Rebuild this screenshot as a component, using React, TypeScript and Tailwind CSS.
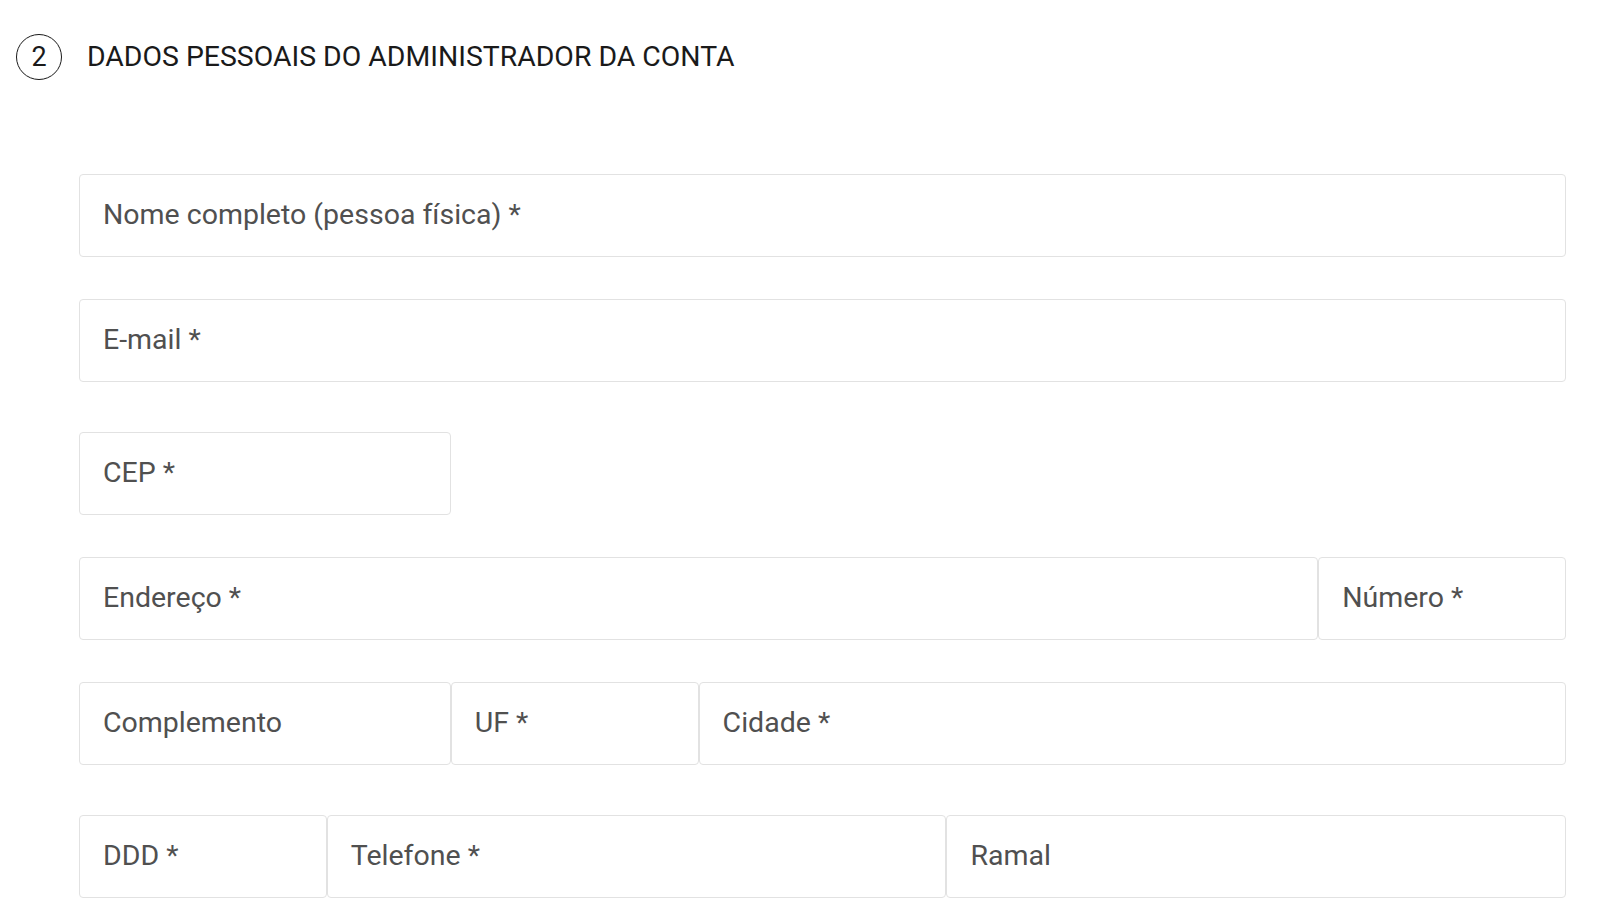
import React from "react";

const font = { fontFamily: "Roboto, 'Liberation Sans', sans-serif" };

function Field({ label, span }: { label: string; span: string }) {
  return (
    <div
      className={`${span} h-[83px] flex items-center pl-[23px] border border-[#e2e2e2] rounded-[4px] bg-white text-[28.5px] text-[#505050] leading-none`}
    >
      {label}
    </div>
  );
}

export default function App() {
  return (
    <div className="w-[1604px] h-[916px] bg-white overflow-hidden" style={font}>
      <div className="flex items-center pl-[16px] pt-[34px]">
        <div className="w-[46px] h-[46px] rounded-full border-[1.5px] border-[#1a1a1a] flex items-center justify-center text-[27px] text-[#1a1a1a] leading-none">
          2
        </div>
        <div className="ml-[25px] text-[28.4px] text-[#1a1a1a] leading-none">
          DADOS PESSOAIS DO ADMINISTRADOR DA CONTA
        </div>
      </div>

      <div className="ml-[79px] w-[1487px] mt-[94px]">
        <div className="grid grid-cols-12">
          <Field label="Nome completo (pessoa física) *" span="col-span-12" />
        </div>
        <div className="grid grid-cols-12 mt-[42px]">
          <Field label="E-mail *" span="col-span-12" />
        </div>
        <div className="grid grid-cols-12 mt-[50px]">
          <Field label="CEP *" span="col-span-3" />
        </div>
        <div className="grid grid-cols-12 mt-[42px]">
          <Field label="Endereço *" span="col-span-10" />
          <Field label="Número *" span="col-span-2" />
        </div>
        <div className="grid grid-cols-12 mt-[42px]">
          <Field label="Complemento" span="col-span-3" />
          <Field label="UF *" span="col-span-2" />
          <Field label="Cidade *" span="col-span-7" />
        </div>
        <div className="grid grid-cols-12 mt-[50px]">
          <Field label="DDD *" span="col-span-2" />
          <Field label="Telefone *" span="col-span-5" />
          <Field label="Ramal" span="col-span-5" />
        </div>
      </div>
    </div>
  );
}
